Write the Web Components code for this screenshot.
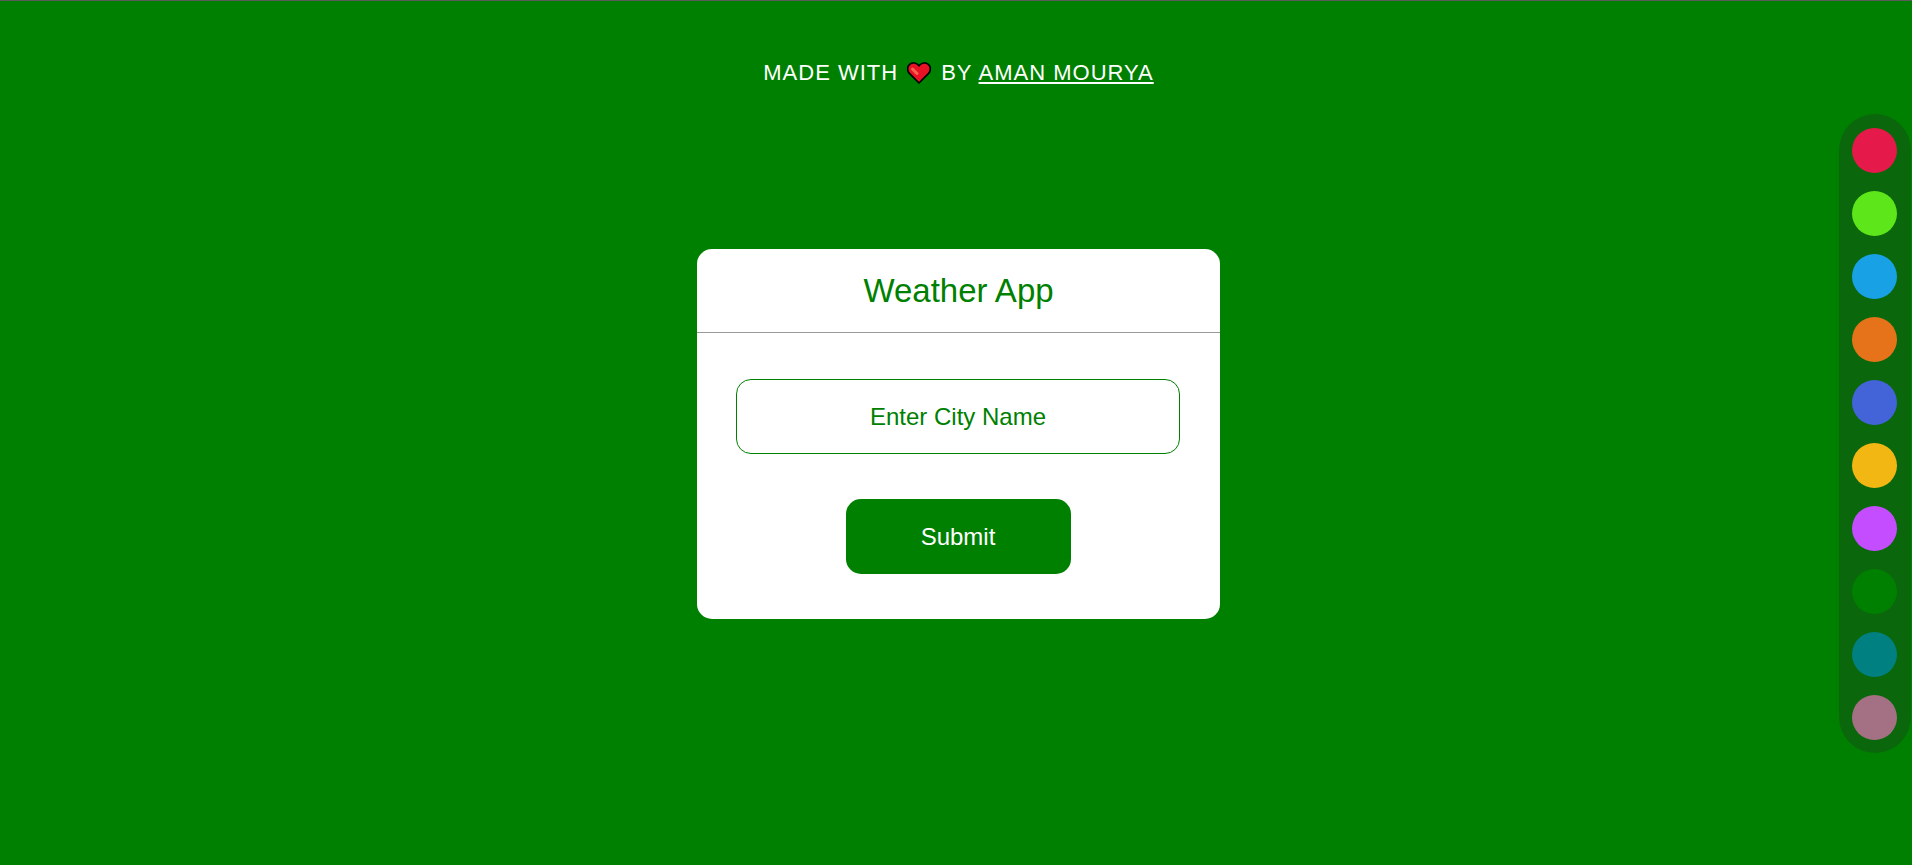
<!DOCTYPE html>
<html lang="en">
<head>
<meta charset="utf-8">
<title>Weather App</title>
<style>
  html, body { height: 100%; margin: 0; }
  body { font-family: "Liberation Sans", Arial, sans-serif; }
</style>
</head>
<body>
<weather-page>
  <made-by slot="credit" href="#author">AMAN MOURYA</made-by>
  <weather-card heading="Weather App"></weather-card>
  <theme-palette slot="palette"></theme-palette>
</weather-page>

<script>
class WeatherPage extends HTMLElement {
  constructor() {
    super();
    this.attachShadow({ mode: "open" }).innerHTML = `
      <style>
        :host { --theme: #008000; display: grid; grid-template-rows: auto 1fr; box-sizing: border-box;
          min-height: 100%; position: relative; background: var(--theme);
          border-top: 1px solid #5b5b5b; }
        header { display: flex; justify-content: center; padding-top: 59px; margin-left: 5px; }
        main { display: flex; flex-direction: column; align-items: center; padding: 163px 0 40px; margin-left: 5px; }
        aside { position: absolute; right: 1px; top: 0; bottom: 0; display: flex; align-items: center; }
      </style>
      <header><slot name="credit"></slot></header>
      <main><slot></slot></main>
      <aside><slot name="palette"></slot></aside>`;
  }
}

class MadeBy extends HTMLElement {
  constructor() {
    super();
    this.attachShadow({ mode: "open" }).innerHTML = `
      <style>
        :host { display: block; color: #fff; font-size: 22px; line-height: 26px; letter-spacing: 1px; white-space: nowrap; }
        p { display: flex; margin: 0; }
        svg { width: 24px; height: 22px; margin: 2px 10px 0 9px; }
        a { color: inherit; margin-left: 6px; text-decoration: underline 2px; text-underline-offset: 2px; text-decoration-skip-ink: none; }
      </style>
      <p><span>MADE WITH</span>
        <svg viewBox="0 0 24 22" role="img" aria-label="love">
          <path d="M12 21 2.400 11.400C-.2 8.600 .2 4.400 2.700 2.300 5.500 0 9.500 .7 12 3.800 14.500 .7 18.500 0 21.300 2.300c2.500 2.100 2.900 6.300 .3 9.100Z" fill="#e81224" stroke="#000" stroke-width="1.700" stroke-linejoin="round"/>
          <path d="M5.500 7 10 11.500" stroke="#f4634c" stroke-width="3" stroke-linecap="round"/>
        </svg>
        <span>BY</span><a><slot></slot></a></p>`;
  }
  connectedCallback() {
    this.shadowRoot.querySelector("a").href = this.getAttribute("href");
  }
}

class WeatherCard extends HTMLElement {
  constructor() {
    super();
    this.attachShadow({ mode: "open" }).innerHTML = `
      <style>
        :host { display: block; width: 523px; max-width: 100%; background: #fff; border-radius: 15px; color: var(--theme); }
        h1 { margin: 0; height: 83px; line-height: 83px; border-bottom: 1px solid #999; font-size: 33px; font-weight: 400; text-align: center; }
        form { display: flex; flex-direction: column; align-items: center; gap: 45px; padding: 46px 40px 45px 39px; }
        input, button { box-sizing: border-box; height: 75px; border-radius: 15px; font: inherit; font-size: 24px; text-align: center; }
        input { width: 100%; border: 1px solid var(--theme); background: #fff; color: var(--theme); outline: 0; }
        input::placeholder { color: var(--theme); opacity: 1; }
        button { width: 225px; border: 0; background: var(--theme); color: #fff; cursor: pointer; }
      </style>
      <h1></h1>
      <form>
        <input type="text" placeholder="Enter City Name" aria-label="Enter City Name">
        <button type="button">Submit</button>
      </form>`;
  }
  connectedCallback() {
    this.shadowRoot.querySelector("h1").textContent = this.getAttribute("heading");
  }
}

class ThemePalette extends HTMLElement {
  constructor() {
    super();
    const colours = ["#e6194b", "#5de619", "#19a1e6", "#e67319", "#4363d8", "#f2b713", "#c44dff", "#008000", "#008080", "#a37183"];
    this.attachShadow({ mode: "open" }).innerHTML = `
      <style>
        :host { display: flex; flex-direction: column; gap: 18px; padding: 14px 14px 13px 13px; border-radius: 36px; background: #0b670b; }
        button { width: 45px; height: 45px; padding: 0; border: 0; border-radius: 50%; cursor: pointer; }
      </style>
      ${colours.map(c => `<button type="button" aria-label="Theme ${c}" data-colour="${c}" style="background:${c}"></button>`).join("")}`;
    this.shadowRoot.addEventListener("click", e => {
      const colour = e.target.dataset.colour;
      if (colour) this.closest("weather-page").style.setProperty("--theme", colour);
    });
  }
}

customElements.define("weather-page", WeatherPage);
customElements.define("made-by", MadeBy);
customElements.define("weather-card", WeatherCard);
customElements.define("theme-palette", ThemePalette);
</script>
</body>
</html>
